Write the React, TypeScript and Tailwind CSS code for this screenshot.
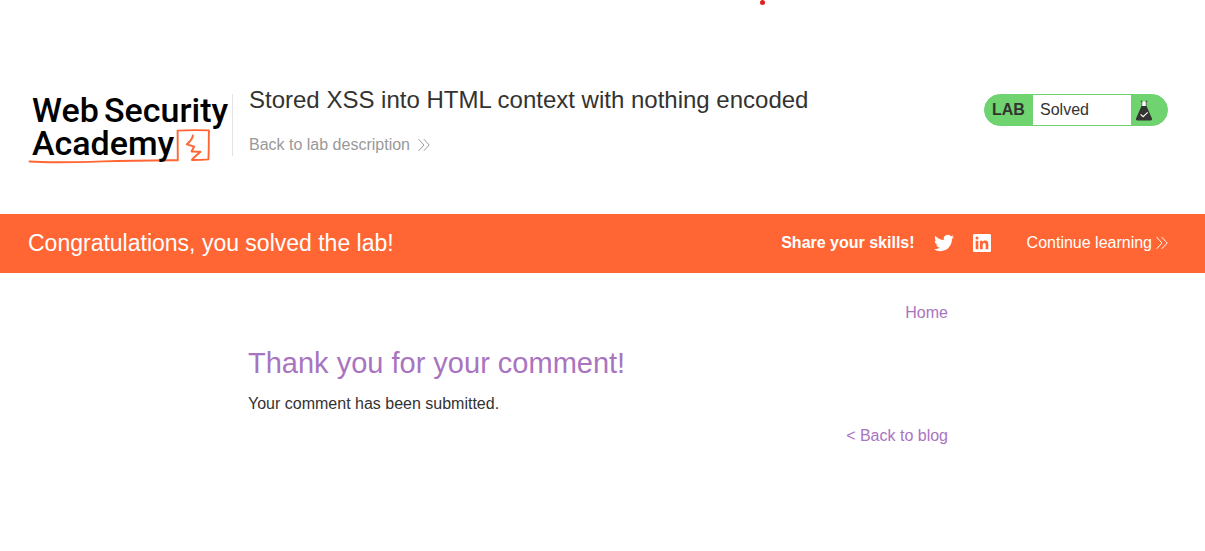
import React from "react";

function Chevrons({ className }: { className: string }) {
  return (
    <svg viewBox="0 0 12 14" fill="none" stroke="currentColor" strokeWidth="1" className={className} aria-hidden="true">
      <path d="M0.6 1.2 6 7 0.6 12.8M5.8 1.2 11.2 7 5.8 12.8" />
    </svg>
  );
}

function Logo() {
  return (
    <a href="#academy" aria-label="Web Security Academy" className="block w-[200px] shrink-0">
      <svg viewBox="0 0 200 72" className="block h-[72px] w-[200px] overflow-visible" fontFamily="Roboto, sans-serif" fontWeight="500" fontSize="34">
        <path
          d="M1.5 69.5 C20 71 45 70.4 75 69.4 C105 68.6 130 68.4 149.8 68.2 L149.6 38.6 C160 38 171 38 181 38.4 C180.6 48 181 58 180.4 67.4 C176 67.8 170 68 164.4 68"
          fill="none"
          stroke="#ff6633"
          strokeWidth="1.9"
          strokeLinejoin="round"
          strokeLinecap="round"
        />
        <path
          d="M164.8 43.6 C164.6 46 162 49.5 158.8 52.4 L166.2 54.6 L163.6 59.4 L172.4 59.8 C169.4 62.4 166.4 65 164 67.8"
          fill="none"
          stroke="#ff6633"
          strokeWidth="2"
          strokeLinejoin="round"
          strokeLinecap="round"
        />
        <text x="4" y="30" fill="#000">Web</text>
        <text x="76" y="30" fill="#000">Security</text>
        <text x="4" y="63" fill="#000">Academy</text>
      </svg>
    </a>
  );
}

function FlaskIcon() {
  return (
    <svg viewBox="0 0 16 21" className="h-[21px] w-4" aria-hidden="true">
      <path d="M5.7 1.5h4.6v5H5.7z" fill="#fff" />
      <path d="M4.6 1h1.2v.6M11.4 1h-1.2v.6M5.8 1v5M10.2 1v5" fill="none" stroke="#333332" strokeWidth=".7" />
      <path d="M5.5 6h5L16 18.4Q16.4 20.5 14.4 20.5H1.6Q-.4 20.5 0 18.4Z" fill="#333332" />
      <path d="m4.6 14.4 2.5 2.3 4.6-4.3" fill="none" stroke="#fff" strokeWidth="1.2" />
    </svg>
  );
}

function LabStatus() {
  return (
    <div className="mt-0.5 flex h-8 w-[184px] shrink-0 overflow-hidden rounded-full border border-[#6fd36f] bg-[#6fd36f] text-base leading-[30px]">
      <span className="w-12 pl-[7px] font-bold">LAB</span>
      <p className="flex-1 bg-white pl-[7px]">Solved</p>
      <span className="flex w-9 items-center pl-[5px]">
        <FlaskIcon />
      </span>
    </div>
  );
}

function TwitterIcon() {
  return (
    <svg viewBox="0 0 24 24" fill="currentColor" className="h-5 w-5" aria-hidden="true">
      <path d="M23.953 4.57a10 10 0 01-2.825.775 4.958 4.958 0 002.163-2.723c-.951.555-2.005.959-3.127 1.184a4.92 4.92 0 00-8.384 4.482C7.69 8.095 4.067 6.13 1.64 3.162a4.822 4.822 0 00-.666 2.475c0 1.71.87 3.213 2.188 4.096a4.904 4.904 0 01-2.228-.616v.06a4.923 4.923 0 003.946 4.827 4.996 4.996 0 01-2.212.085 4.936 4.936 0 004.604 3.417 9.867 9.867 0 01-6.102 2.105c-.39 0-.779-.023-1.17-.067a13.995 13.995 0 007.557 2.209c9.053 0 13.998-7.496 13.998-13.985 0-.21 0-.42-.015-.63A9.935 9.935 0 0024 4.59z" />
    </svg>
  );
}

function LinkedInIcon() {
  return (
    <svg viewBox="0 0 24 24" fill="currentColor" className="h-[18px] w-[18px]" aria-hidden="true">
      <path d="M20.447 20.452h-3.554v-5.569c0-1.328-.027-3.037-1.852-3.037-1.853 0-2.136 1.445-2.136 2.939v5.667H9.351V9h3.414v1.561h.046c.477-.9 1.637-1.85 3.37-1.85 3.601 0 4.267 2.37 4.267 5.455v6.286zM5.337 7.433a2.062 2.062 0 01-2.063-2.065 2.064 2.064 0 112.063 2.065zm1.782 13.019H3.555V9h3.564v11.452zM22.225 0H1.771C.792 0 0 .774 0 1.729v20.542C0 23.227.792 24 1.771 24h20.451C23.2 24 24 23.227 24 22.271V1.729C24 .774 23.2 0 22.222 0h.003z" />
    </svg>
  );
}

export default function App() {
  return (
    <div className="relative min-h-screen bg-white font-['Liberation_Sans',Arial,sans-serif] text-base text-[#333332]">
      <span className="absolute left-[760px] top-0 h-[5px] w-[5px] rounded-full bg-[#e02020]" aria-hidden="true" />

      <header className="pr-[9px]">
        <div className="flex items-start px-7 pt-[92px] pb-[50px]">
          <Logo />
          <div className="mt-0.5 ml-1 h-[62px] w-px bg-[#e4e4e4]" />
          <div className="-mt-2 ml-4 flex-1">
            <h2 className="text-2xl">Stored XSS into HTML context with nothing encoded</h2>
            <a href="#description" className="mt-[17px] inline-flex items-center gap-2 text-[#999999]">
              Back to lab description
              <Chevrons className="h-3.5 w-3" />
            </a>
          </div>
          <LabStatus />
        </div>
      </header>

      <section className="bg-[#ff6633] pr-[9px] text-white">
        <div className="flex items-center px-7 pt-[13px] pb-3.5">
          <h4 className="flex-1 text-[23px] leading-8">Congratulations, you solved the lab!</h4>
          <span className="font-bold">Share your skills!</span>
          <a href="#twitter" aria-label="Share on Twitter" className="ml-[19px]">
            <TwitterIcon />
          </a>
          <a href="#linkedin" aria-label="Share on LinkedIn" className="ml-[19px]">
            <LinkedInIcon />
          </a>
          <a href="#continue" className="ml-9 flex items-center gap-1">
            Continue learning
            <Chevrons className="h-3.5 w-3" />
          </a>
        </div>
      </section>

      <main className="pt-7 pr-[9px]">
        <div className="mx-auto max-w-[700px]">
          <nav className="flex justify-end text-[#a974bf]">
            <a href="#home">Home</a>
          </nav>
          <h1 className="mt-5 text-[29px] leading-9 text-[#a974bf]">Thank you for your comment!</h1>
          <p className="mt-[11px]">Your comment has been submitted.</p>
          <div className="mt-2 flex justify-end text-[#a974bf]">
            <a href="#blog">&lt; Back to blog</a>
          </div>
        </div>
      </main>
    </div>
  );
}
